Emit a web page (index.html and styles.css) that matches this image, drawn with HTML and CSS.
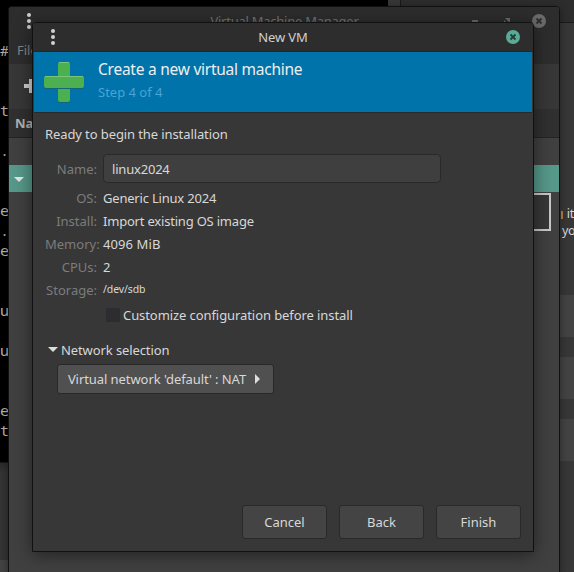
FILE: index.html
```html
<!DOCTYPE html>
<html lang="en">
<head>
<meta charset="utf-8">
<title>New VM</title>
<link rel="stylesheet" href="styles.css">
</head>
<body>
<main class="desktop">
  <div class="files"><div class="files-bar"></div></div>
  <div class="settings">
    <div class="settings-bar"></div>
    <div class="settings-text"><p class="line-one"><i class="cut-letter"></i>it</p><p>yo</p></div>
    <div class="settings-card"></div><div class="settings-card"></div><div class="settings-card"></div>
  </div>
  <pre class="terminal">


#


t

.


e
.
e


u

u


e
t</pre>
  <section class="window manager">
    <header class="manager-title">
      <svg class="dots" viewBox="0 0 4 16"><circle cx="2" cy="2" r="2"/><circle cx="2" cy="8" r="2"/><circle cx="2" cy="14" r="2"/></svg>
      <span class="manager-name">Virtual Machine Manager</span>
      <svg class="window-controls" viewBox="0 0 80 14"><path d="M6 6h6v2H6z"/><path d="M39 4h5v5zM38 6l5 5h-5z"/><circle cx="73" cy="7" r="7"/><path class="cross" d="M70.5 4.5l5 5m0-5l-5 5"/></svg>
    </header>
    <nav class="manager-menu">File</nav>
    <div class="manager-tools"><svg viewBox="0 0 14 14"><path d="M5 0h4v5h5v4H9v5H5V9H0V5h5z"/></svg></div>
    <div class="manager-columns">Name</div>
    <div class="manager-list">
      <div class="selected"><svg viewBox="0 0 10 5"><path d="M0 0h10L5 5z"/></svg></div>
      <div class="graph"></div>
    </div>
  </section>
  <section class="window dialog">
    <header class="dialog-title">
      <svg class="dots" viewBox="0 0 4 16"><circle cx="2" cy="2" r="2"/><circle cx="2" cy="8" r="2"/><circle cx="2" cy="14" r="2"/></svg>
      <span class="dialog-name">New VM</span>
      <svg class="close" viewBox="0 0 14 14"><circle cx="7" cy="7" r="7"/><path d="M4.5 4.5l5 5m0-5l-5 5"/></svg>
    </header>
    <div class="banner">
      <svg class="plus" viewBox="0 0 40 41">
        <rect class="shade" x="14" y="1" width="12" height="40" rx="2"/>
        <rect x="14" y="0" width="12" height="40" rx="2"/>
        <path class="shine" d="M15 .5h10"/>
        <rect class="shade" x="0" y="15" width="40" height="12" rx="2"/>
        <rect x="0" y="14" width="40" height="12" rx="2"/>
        <path class="shine" d="M1 14.5h38"/>
      </svg>
      <div><h1>Create a new virtual machine</h1><p>Step 4 of 4</p></div>
    </div>
    <div class="content">
      <p class="intro">Ready to begin the installation</p>
      <div class="form">
        <label class="tall">Name:</label><div class="entry">linux2024</div>
        <label>OS:</label><span>Generic Linux 2024</span>
        <label>Install:</label><span>Import existing OS image</span>
        <label>Memory:</label><span class="memory">4096 MiB</span>
        <label>CPUs:</label><span>2</span>
        <label>Storage:</label><span class="path">/dev/sdb</span>
      </div>
      <div class="customize"><i class="checkbox"></i><span>Customize configuration before install</span></div>
      <div class="expander"><svg viewBox="0 0 10 5"><path d="M0 0h10L5 5z"/></svg><span>Network selection</span></div>
      <div class="button network"><span>Virtual network 'default' : NAT</span><svg viewBox="0 0 5 10"><path d="M0 0l5 5-5 5z"/></svg></div>
    </div>
    <footer class="actions"><div class="button">Cancel</div><div class="button">Back</div><div class="button">Finish</div></footer>
  </section>
</main>
</body>
</html>
```

FILE: styles.css
```css
* { box-sizing: border-box; }
body { margin: 0; font: 13px/18px "Noto Sans", sans-serif; color: #d8d8d8; }
h1, p, pre { margin: 0; font-weight: 400; }
svg { display: block; flex: none; overflow: visible; }
.desktop { position: relative; width: 574px; height: 572px; overflow: hidden; background: #373737; }
.files { position: absolute; left: 0; top: 463px; width: 9px; height: 109px; padding-top: 97px; background: linear-gradient(#2b2b2b, #343434 10px); }
.files-bar { height: 12px; background: #434343; }
.settings { position: absolute; left: 400px; top: 0; width: 174px; height: 572px; border-left: 1px solid #181818; background: #373737; }
.settings-bar { height: 23px; background: #2d2d2d; border-bottom: 1px solid #1c1c1c; }
.settings-text { height: 272px; padding: 182px 0 0 161px; line-height: 17px; font-size: 12.5px; letter-spacing: -.3px; white-space: nowrap; }
.line-one { display: flex; align-items: center; gap: 4px; margin-left: -1px; }
.cut-letter { width: 2px; height: 8px; margin-top: 3px; background: #b98043; }
.settings-card { height: 42px; margin-bottom: 20px; background: #434343; }
.terminal { position: absolute; left: 0; top: 0; width: 388px; height: 463px; background: #000; border-bottom: 1px solid #181818; color: #bcb6ad; font: 15px/20px "Noto Sans Mono", "DejaVu Sans Mono", monospace; }
.window { position: absolute; overflow: hidden; }
.manager { left: 8px; top: 6px; width: 552px; height: 570px; border: 1px solid #111; border-radius: 4px 4px 0 0; background: #404040; box-shadow: 0 2px 8px #0006; color: #858585; }
.dots { width: 4px; height: 16px; fill: #d5cfcf; }
.manager-title { display: flex; align-items: center; height: 28px; padding: 0 13px 0 18px; background: #2d2d2d; }
.manager-name { flex: 1; padding-left: 72px; text-align: center; color: #747474; letter-spacing: -.25px; }
.window-controls { width: 80px; height: 14px; fill: #6b6b6b; }
.window-controls .cross { stroke: #303030; stroke-width: 2; }
.manager-menu { height: 29px; padding: 6px 8px; background: #2d2d2d; }
.manager-tools { height: 45px; padding: 15px; background: #373737; }
.manager-tools svg { width: 14px; height: 14px; fill: #d0d0d0; }
.manager-columns { height: 29px; padding: 5px 6px; background: #303030; border-bottom: 1px solid #242424; color: #b2b2b2; font-weight: 700; }
.manager-list { padding-top: 27px; }
.selected { height: 27px; padding: 12px 5px; background: #56988a; }
.selected svg { width: 10px; height: 5px; fill: #dfe8e6; }
.graph { width: 60px; height: 38px; margin: 1px 8px 0 auto; border: 2px solid #c9c9c9; background: #373737; }
.dialog { left: 32px; top: 22px; width: 502px; height: 530px; display: flex; flex-direction: column; border: 1px solid #111; border-radius: 4px 4px 0 0; background: #373737; box-shadow: 0 3px 18px #0007; }
.dialog-title { display: flex; align-items: center; height: 29px; padding: 0 13px 0 18px; background: #2d2d2d; border-bottom: 1px solid #262626; }
.dialog-name { flex: 1; padding-left: 5px; text-align: center; color: #cfcfcf; letter-spacing: -.1px; }
.close { width: 14px; height: 14px; fill: #5aaa98; }
.close path { stroke: #263d38; stroke-width: 1.8; }
.banner { display: flex; height: 60px; margin: 0 1px; padding: 10px 10px 0; gap: 14px; background: #0073aa; box-shadow: 0 1px #292929; }
.banner > div { margin-top: -5px; }
.banner h1 { font-size: 15.5px; letter-spacing: -.25px; line-height: 24px; color: #eee; white-space: nowrap; }
.banner p { line-height: 22px; color: #4aa4d4; }
.plus { width: 40px; height: 41px; fill: #4caf50; }
.plus .shade { fill: #12667a; }
.plus .shine { stroke: #79c37b; }
.content { flex: 1; padding: 13px 12px 0; white-space: nowrap; }
.intro { height: 29px; letter-spacing: -.1px; }
.form { display: grid; grid-template-columns: 52px 338px; column-gap: 6px; grid-template-rows: 33px repeat(5, 23px); line-height: 23px; letter-spacing: -.2px; }
.form label { text-align: right; color: #7c7c7c; letter-spacing: 0; }
.form .tall { line-height: 30px; }
.form .memory { letter-spacing: .1px; }
.entry { height: 29px; padding-left: 8px; line-height: 28px; border: 1px solid #292929; border-radius: 4px; background: #3f3f3f; }
.path { font-size: 10.5px; letter-spacing: -.1px; line-height: 20px; }
.customize { display: flex; align-items: center; height: 18px; margin-top: 4px; padding-left: 61px; gap: 3px; letter-spacing: -.08px; }
.checkbox { width: 14px; height: 14px; border: 1px solid #2b2b33; border-radius: 2px; background: #2d2d2d; }
.expander { display: flex; align-items: center; height: 18px; margin-top: 17px; padding-left: 3px; gap: 3px; letter-spacing: -.1px; }
.expander svg { width: 10px; height: 5px; margin-top: -2px; fill: #dedede; }
.button { display: flex; align-items: center; justify-content: center; width: 85px; height: 34px; border: 1px solid #292929; border-radius: 3px; background: #444; }
.network { width: 217px; height: 30px; margin: 5px 0 0 12px; padding-right: 3px; gap: 9px; background: #505050; letter-spacing: -.07px; }
.network svg { width: 5px; height: 10px; fill: #dedede; }
.actions { display: flex; justify-content: flex-end; gap: 12px; padding: 0 12px 12px; }
```
